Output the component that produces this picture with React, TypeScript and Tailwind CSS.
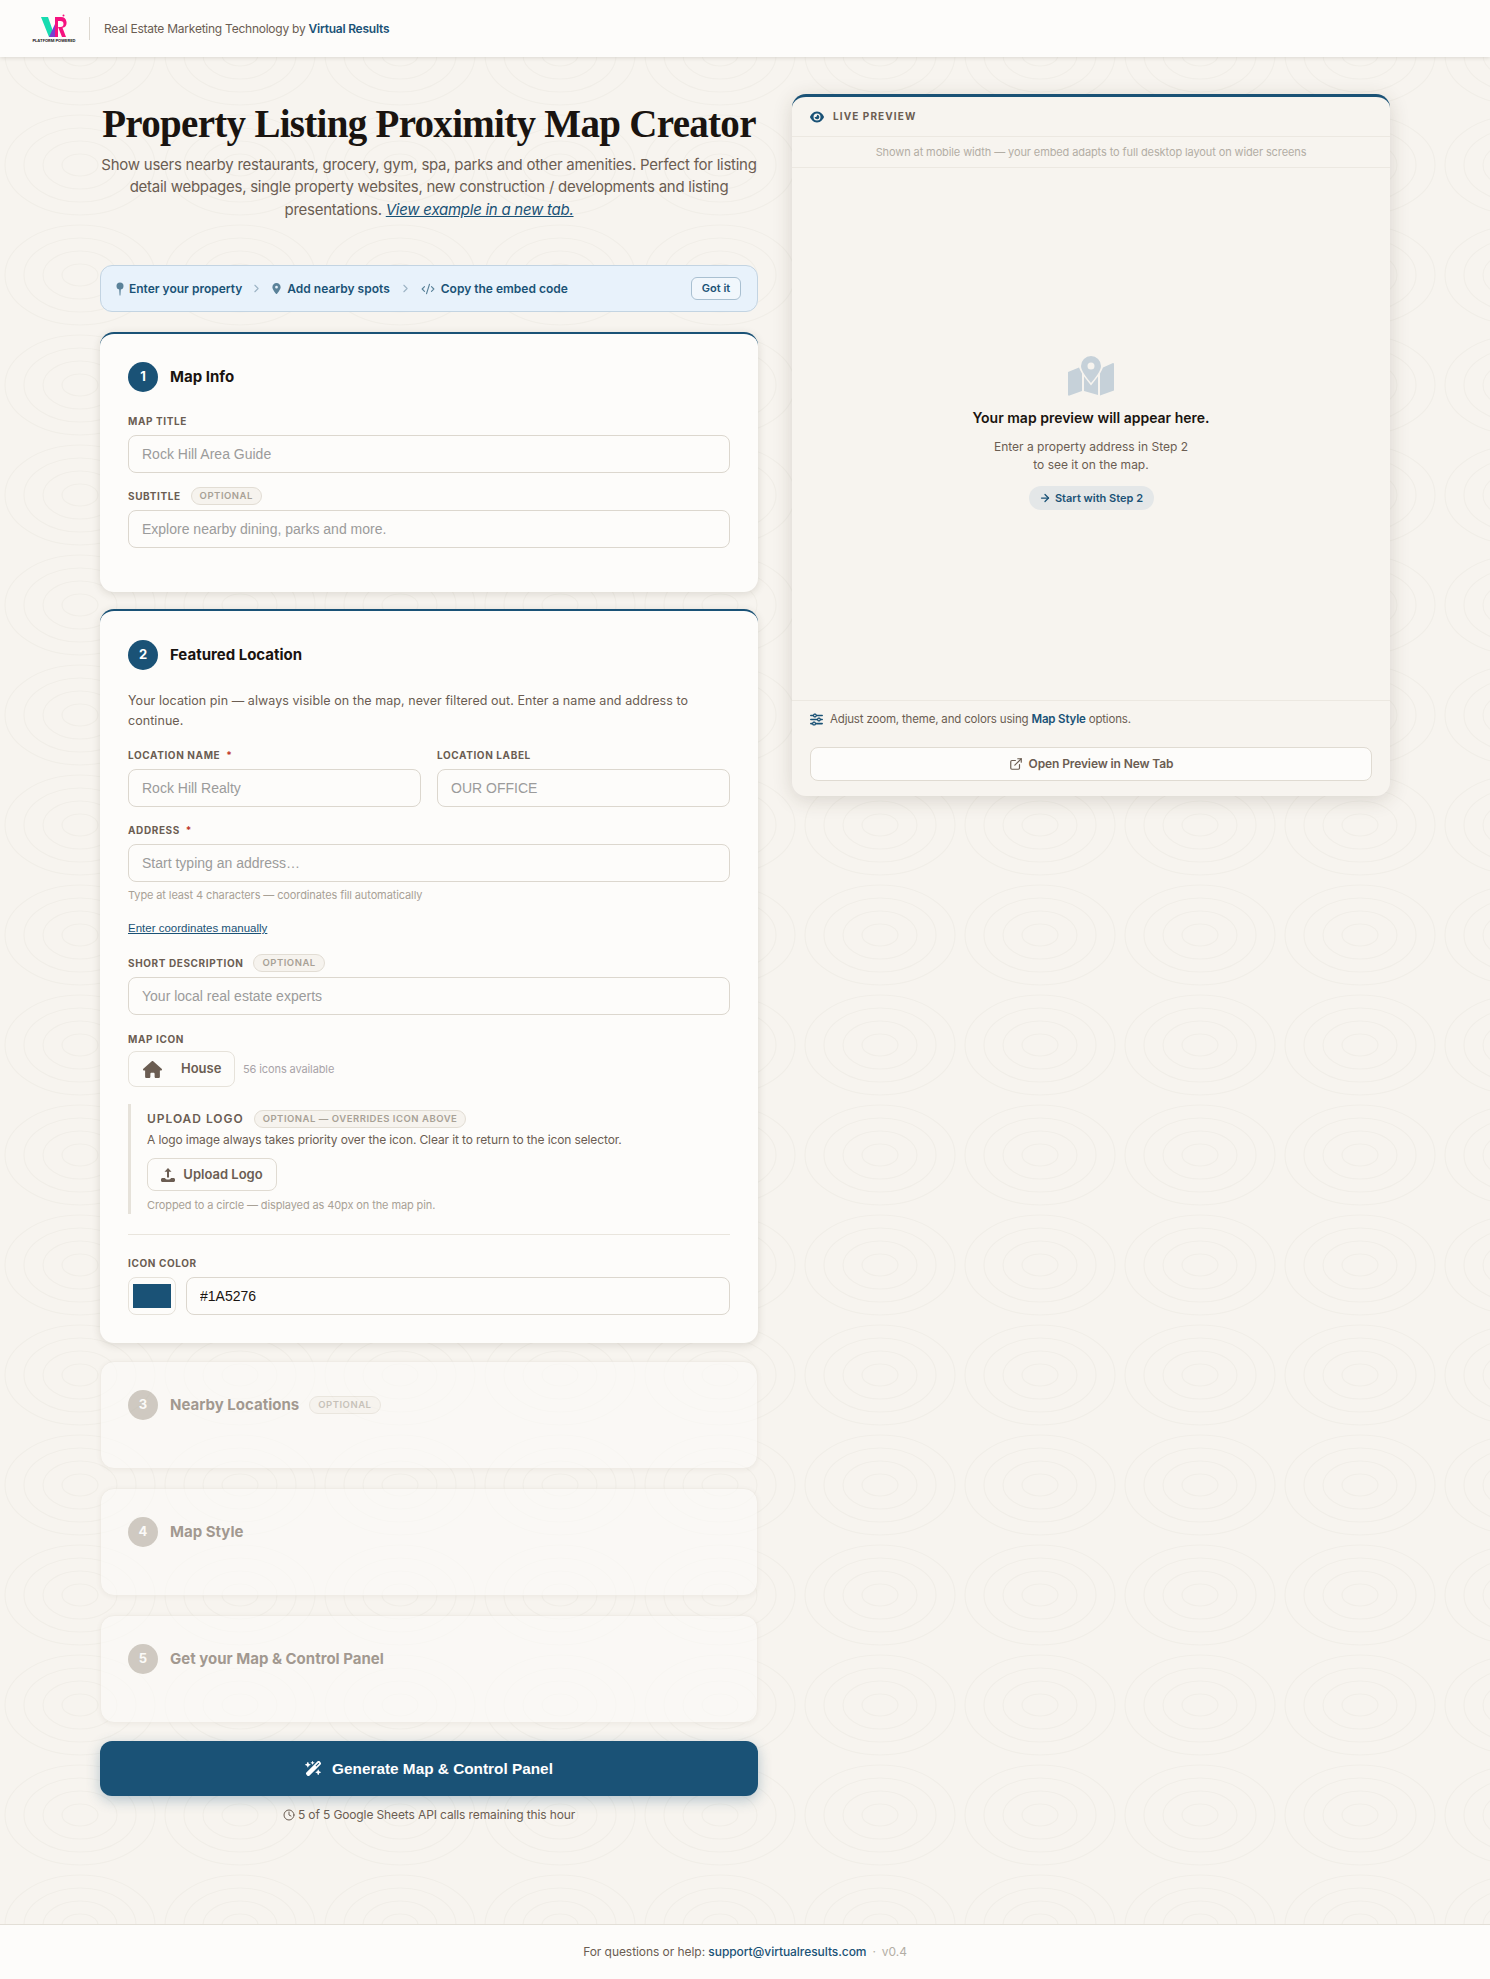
import { ChevronRight, CodeXml, ExternalLink, Clock, ArrowRight } from "lucide-react";
import { FaEye, FaHouse, FaLocationDot, FaSliders, FaWandMagicSparkles } from "react-icons/fa6";

function Rings() {
  return (
    <svg className="absolute inset-0 w-full h-full pointer-events-none" aria-hidden="true">
      <defs>
        <pattern id="rings" width="160" height="110" patternUnits="userSpaceOnUse">
          <g fill="none" stroke="#f1eee8" strokeWidth="1.2">
            <ellipse cx="80" cy="55" rx="75" ry="50" />
            <ellipse cx="80" cy="55" rx="56" ry="37" />
            <ellipse cx="80" cy="55" rx="37" ry="24" />
            <ellipse cx="80" cy="55" rx="18" ry="11" />
          </g>
        </pattern>
      </defs>
      <rect width="100%" height="100%" fill="url(#rings)" />
    </svg>
  );
}

function Logo() {
  return (
    <div className="flex flex-col items-center w-[42px]">
      <svg width="26" height="23" viewBox="0 0 26 23">
        <path d="M0 3h7l7 20H8z" fill="#17dcb0" />
        <path d="M8 23h6l3-8-3-5z" fill="#7a3fd0" />
        <path d="M14 3h3v20h-3z" fill="#f5127f" />
        <path d="M15 3h5a5.5 5.5 0 0 1 1.5 10.800L25 23h-4l-4-10h2.500a2.500 2.500 0 0 0 0-6H15z" fill="#f5127f" />
        <circle cx="22.500" cy="1.500" r="1" fill="#f5127f" />
      </svg>
      <span className="text-[4px] leading-[6px] font-bold whitespace-nowrap text-[#222] mt-[1px]">PLATFORM POWERED</span>
    </div>
  );
}

function Label({ children, required }: { children: React.ReactNode; required?: boolean }) {
  return (
    <span className="text-[10px] leading-[14px] font-bold tracking-[0.06em] uppercase text-[#6b5d52]">
      {children}
      {required && <span className="text-[#c0392b] ml-[6px]">*</span>}
    </span>
  );
}

function Badge({ children }: { children: React.ReactNode }) {
  return (
    <span className="inline-flex items-center h-[18px] px-[8px] rounded-full border border-[#e2ddd4] bg-[#f6f3ee] text-[9.500px] font-semibold tracking-[0.055em] uppercase text-[#a8a196] whitespace-nowrap">
      {children}
    </span>
  );
}

function Field({ placeholder, value }: { placeholder?: string; value?: string }) {
  return (
    <input
      readOnly
      placeholder={placeholder}
      value={value}
      className="block w-full h-[38px] px-[13px] rounded-[8px] border border-[#dcd7ce] bg-[#fdfcfa] font-['Liberation_Sans',sans-serif] text-[14px] text-[#1a1410] placeholder:text-[#9b9b9b] outline-none"
    />
  );
}

function StepTitle({ n, title, muted }: { n: number; title: string; muted?: boolean }) {
  return (
    <div className="flex items-center gap-[12px]">
      <span
        className={
          muted
            ? "w-[30px] h-[30px] rounded-full bg-[#b5aea3] flex items-center justify-center text-white text-[13px] font-bold"
            : "w-[30px] h-[30px] rounded-full bg-[#1a5276] flex items-center justify-center text-white text-[13px] font-bold"
        }
      >
        {n}
      </span>
      <span className={muted ? "text-[15px] font-bold text-[#6b5d52]" : "text-[15px] font-bold text-[#1a1410]"}>{title}</span>
    </div>
  );
}

function MutedCard({ n, title, badge }: { n: number; title: string; badge?: string }) {
  return (
    <section className="h-[108px] rounded-[14px] bg-[#fdfcfa] border border-[#ece8e1] shadow-[0_1px_4px_rgba(60,50,30,0.08)] opacity-60 px-[27px] pt-[28px]">
      <div className="flex items-center gap-[10px]">
        <StepTitle n={n} title={title} muted />
        {badge && <Badge>{badge}</Badge>}
      </div>
    </section>
  );
}

function PinSmall() {
  return (
    <svg width="8" height="14" viewBox="0 0 8 14" fill="#5a8299">
      <circle cx="4" cy="4" r="3.500" />
      <path d="M3.200 7h1.600L4.400 13.500h-.8z" />
    </svg>
  );
}

function MapGraphic() {
  return (
    <svg width="46" height="40" viewBox="0 0 46 40" fill="#c6d1d9">
      <path d="M0 16l11-4.500c.8 2 1.800 4 3 6V35L1.500 39.500a1 1 0 0 1-1.500-1z" />
      <path d="M16 20.500l7 9 7-9V39l-14-4z" />
      <path d="M32 17.500c1.200-2 2.200-4 3-6l10-4.500a1 1 0 0 1 1 1V34.500L32 39.500z" />
      <path fillRule="evenodd" d="M23 0a10 10 0 0 1 10 10c0 5-6 12-10 17-4-5-10-12-10-17A10 10 0 0 1 23 0zm0 6.500a3.500 3.500 0 1 0 0 7 3.500 3.500 0 0 0 0-7z" />
    </svg>
  );
}

function UploadGlyph() {
  return (
    <svg width="14" height="14" viewBox="0 0 14 14" fill="#6b5d52">
      <path d="M7 0l3.500 3.800H8V9.500H6V3.800H3.500z" />
      <path d="M0 11.500C0 10.700.7 10 1.500 10H4c.4 1 1.600 1.500 3 1.500S9.600 11 10 10h2.500c.8 0 1.500.7 1.500 1.500V12.500c0 .8-.7 1.500-1.500 1.500h-11C.7 14 0 13.300 0 12.500z" />
    </svg>
  );
}

export default function App() {
  return (
    <div className="relative min-h-[1979px] flex flex-col bg-[#f7f4ef] font-['Inter',sans-serif] text-[#1a1410]">
      <Rings />

      <header className="relative z-10 h-[57px] bg-[#fdfcfa] shadow-[0_1px_4px_rgba(60,50,30,0.14)] flex items-center pl-[33px]">
        <Logo />
        <div className="w-px h-[23px] bg-[#ddd8cf] ml-[14px] mr-[14px]" />
        <p className="text-[12px] tracking-[-0.02em] text-[#6b5d52]">
          Real Estate Marketing Technology by <span className="font-semibold text-[#1a5276]">Virtual Results</span>
        </p>
      </header>

      <main className="relative z-10 flex-1 flex items-start gap-[34px] pl-[100px] pt-[37px]">
        <div className="w-[658px] shrink-0">
          <div className="text-center pt-[6px] pb-[44px]">
            <h1 className="font-['Liberation_Serif',serif] text-[39px] leading-[48px] font-bold tracking-[-0.018em] whitespace-nowrap">
              Property Listing Proximity Map Creator
            </h1>
            <p className="mt-[6px] text-[15px] leading-[22.400px] tracking-[-0.017em] text-[#6b5d52]">
              Show users nearby restaurants, grocery, gym, spa, parks and other amenities. Perfect for listing detail webpages, single property websites, new construction / developments and listing presentations.{" "}
              <a className="italic underline text-[#1a5276]">View example in a new tab.</a>
            </p>
          </div>

          <div className="h-[47px] rounded-[12px] border border-[#c3d4e2] bg-[#e8f2fb] flex items-center pl-[15px] pr-[16px] text-[12px] font-semibold text-[#1a5276]">
            <PinSmall />
            <span className="ml-[5px]">Enter your property</span>
            <ChevronRight className="mx-[8px] text-[#9db3c4]" size={13} />
            <FaLocationDot className="text-[#5a8299]" size={11} />
            <span className="ml-[5px]">Add nearby spots</span>
            <ChevronRight className="mx-[9px] text-[#9db3c4]" size={13} />
            <CodeXml className="text-[#5a8299]" size={14} />
            <span className="ml-[6px]">Copy the embed code</span>
            <button className="ml-auto w-[50px] h-[23px] rounded-[6px] border border-[#a9c0d1] bg-[#f1f7fc] text-[11px] font-semibold text-[#1a5276]">Got it</button>
          </div>

          <section className="mt-[20px] h-[260px] rounded-[14px] border-t-2 border-[#1a5276] bg-[#fdfcfa] shadow-[0_2px_8px_rgba(60,50,30,0.14)] px-[28px] pt-[28px]">
            <StepTitle n={1} title="Map Info" />
            <div className="mt-[22px] mb-[7px] flex items-center h-[14px]"><Label>Map Title</Label></div>
            <Field placeholder="Rock Hill Area Guide" />
            <div className="mt-[14px] mb-[5px] flex items-center gap-[10px] h-[18px]"><Label>Subtitle</Label><Badge>Optional</Badge></div>
            <Field placeholder="Explore nearby dining, parks and more." />
          </section>

          <section className="mt-[17px] h-[734px] rounded-[14px] border-t-2 border-[#1a5276] bg-[#fdfcfa] shadow-[0_2px_8px_rgba(60,50,30,0.14)] px-[28px] pt-[29px]">
            <StepTitle n={2} title="Featured Location" />
            <p className="mt-[21px] text-[12.500px] leading-[20px] tracking-[0.005em] text-[#6b5d52]">
              Your location pin — always visible on the map, never filtered out. Enter a name and address to continue.
            </p>
            <div className="mt-[17px] grid grid-cols-2 gap-x-[16px]">
              <div>
                <div className="mb-[7px] h-[14px] flex items-center"><Label required>Location Name</Label></div>
                <Field placeholder="Rock Hill Realty" />
              </div>
              <div>
                <div className="mb-[7px] h-[14px] flex items-center"><Label>Location Label</Label></div>
                <Field placeholder="OUR OFFICE" />
              </div>
            </div>
            <div className="mt-[16px] mb-[7px] h-[14px] flex items-center"><Label required>Address</Label></div>
            <Field placeholder="Start typing an address…" />
            <p className="mt-[5px] text-[11px] leading-[16px] tracking-[-0.01em] text-[#a8a196]">Type at least 4 characters — coordinates fill automatically</p>
            <a className="block mt-[17px] font-['Liberation_Sans',sans-serif] text-[11.500px] leading-[16px] underline text-[#1a5276]">Enter coordinates manually</a>
            <div className="mt-[18px] mb-[5px] flex items-center gap-[10px] h-[18px]"><Label>Short Description</Label><Badge>Optional</Badge></div>
            <Field placeholder="Your local real estate experts" />
            <div className="mt-[17px] mb-[5px] h-[14px] flex items-center"><Label>Map Icon</Label></div>
            <div className="flex items-center gap-[8px]">
              <button className="w-[107px] h-[36px] rounded-[8px] border border-[#e6e2da] flex items-center pl-[14px] text-[13px] font-semibold text-[#6b5d52]">
                <FaHouse size={19} />
                <span className="ml-[19px]">House</span>
              </button>
              <span className="text-[11px] tracking-[-0.01em] text-[#a8a3a8]">56 icons available</span>
            </div>
            <div className="mt-[17px] h-[110px] border-l-[3px] border-[#e6e2da] pl-[16px] pt-[5px]">
              <div className="flex items-center gap-[10px] h-[19px]">
                <span className="text-[12px] font-semibold tracking-[0.08em] uppercase text-[#6b5d52]">Upload Logo</span>
                <Badge>Optional — overrides icon above</Badge>
              </div>
              <p className="mt-[2px] text-[12px] leading-[20px] tracking-[-0.01em] text-[#6b5d52]">A logo image always takes priority over the icon. Clear it to return to the icon selector.</p>
              <button className="mt-[8px] w-[130px] h-[33px] rounded-[8px] border border-[#e0dbd2] flex items-center justify-center gap-[8px] text-[13px] font-semibold text-[#6b5d52]">
                <UploadGlyph />
                Upload Logo
              </button>
              <p className="mt-[6px] text-[11px] leading-[16px] tracking-[-0.01em] text-[#a8a196]">Cropped to a circle — displayed as 40px on the map pin.</p>
            </div>
            <div className="mt-[20px] h-px bg-[#e9e5dd]" />
            <div className="mt-[21px] mb-[7px] h-[14px] flex items-center"><Label>Icon Color</Label></div>
            <div className="flex gap-[10px]">
              <div className="w-[48px] h-[38px] shrink-0 rounded-[8px] border border-[#e6e2da] p-[4px] flex items-center justify-center">
                <div className="w-[38px] h-[24px] bg-[#1a5276]" />
              </div>
              <Field value="#1A5276" />
            </div>
          </section>

          <div className="mt-[18px] flex flex-col gap-[19px]">
            <MutedCard n={3} title="Nearby Locations" badge="Optional" />
            <MutedCard n={4} title="Map Style" />
            <MutedCard n={5} title="Get your Map & Control Panel" />
          </div>

          <button className="mt-[18px] w-full h-[55px] rounded-[12px] bg-[#1a5276] shadow-[0_4px_14px_rgba(26,82,118,0.3)] flex items-center justify-center gap-[10px] font-['Liberation_Sans',sans-serif] text-[15.350px] font-bold text-white">
            <FaWandMagicSparkles size={17} />
            Generate Map & Control Panel
          </button>
          <p className="mt-[11px] flex items-center justify-center gap-[3px] text-[12px] leading-[16px] tracking-[-0.01em] text-[#6b5d52]">
            <Clock size={12} />
            5 of 5 Google Sheets API calls remaining this hour
          </p>
        </div>

        <aside className="w-[598px] shrink-0 h-[702px] flex flex-col rounded-[14px] border-t-[3px] border-[#1a5276] bg-[#f7f4ef] shadow-[0_4px_20px_rgba(60,50,30,0.16)] overflow-hidden">
          <div className="h-[40px] shrink-0 flex items-center gap-[9px] pl-[18px] border-b border-[#ece8e1]">
            <FaEye className="text-[#1a5276]" size={14} />
            <span className="text-[10px] font-bold tracking-[0.11em] uppercase text-[#6b5d52]">Live Preview</span>
          </div>
          <div className="h-[31px] shrink-0 flex items-center justify-center border-b border-[#ece8e1] text-[11px] tracking-[-0.01em] text-[#b3aea5]">
            Shown at mobile width — your embed adapts to full desktop layout on wider screens
          </div>
          <div className="flex-1 flex flex-col items-center pt-[188px]">
            <MapGraphic />
            <p className="mt-[12px] text-[14px] leading-[20px] font-semibold text-[#1a1410]">Your map preview will appear here.</p>
            <p className="mt-[10px] text-[12px] leading-[18px] text-center text-[#6b5d52]">
              Enter a property address in Step 2
              <br />
              to see it on the map.
            </p>
            <span className="mt-[12px] w-[125px] h-[24px] rounded-full bg-[#e4e7e8] flex items-center justify-center gap-[4px] text-[11px] font-semibold text-[#1a5276]">
              <ArrowRight size={12} strokeWidth={2.5} />
              Start with Step 2
            </span>
          </div>
          <div className="h-[96px] shrink-0 border-t border-[#ece8e1] px-[18px]">
            <div className="h-[37px] flex items-center gap-[7px] text-[11.500px] tracking-[-0.015em] text-[#6b5d52]">
              <FaSliders className="text-[#1a5276]" size={13} />
              <span>
                Adjust zoom, theme, and colors using <strong className="font-semibold text-[#1a5276]">Map Style</strong> options.
              </span>
            </div>
            <button className="mt-[9px] w-full h-[34px] rounded-[8px] border border-[#e0dbd2] bg-[#fdfcfa] flex items-center justify-center gap-[6px] text-[12px] tracking-[-0.01em] font-semibold text-[#6b5d52]">
              <ExternalLink size={14} />
              Open Preview in New Tab
            </button>
          </div>
        </aside>
      </main>

      <footer className="relative z-10 h-[55px] border-t border-[#e3dfd7] bg-[#fdfcfa] flex items-center justify-center gap-[6px] text-[12px] tracking-[-0.005em] text-[#6b5d52]">
        <span>
          For questions or help: <a className="font-medium text-[#1a5276]">support@virtualresults.com</a>
        </span>
        <span className="text-[#b3aea5]">·</span>
        <span className="text-[#b3aea5]">v0.4</span>
      </footer>
    </div>
  );
}
